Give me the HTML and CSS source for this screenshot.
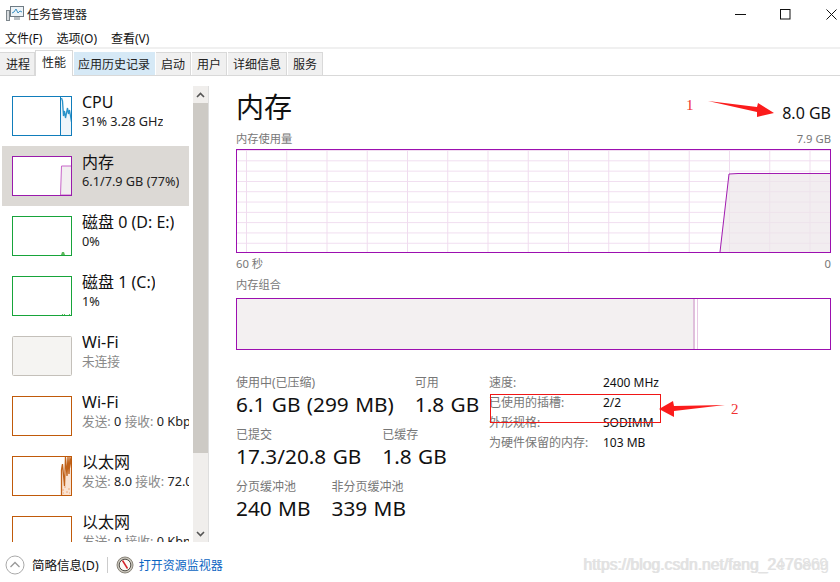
FILE: index.html
```html
<!DOCTYPE html>
<html lang="zh-CN">
<head>
    <meta charset="UTF-8">
    <meta name="viewport" content="width=device-width, initial-scale=1.0">
    <title>任务管理器</title>
    <link rel="stylesheet" href="styles.css">
</head>
<body>
    <header class="titlebar">
        <svg class="app-icon" width="18" height="18" viewBox="0 0 18 18">
            <rect x="4.5" y="1.5" width="13" height="10" fill="#eef4f8" stroke="#6f7b84"/>
            <path d="M6 8l2-1 2-3 2 4 2-2 2 1" fill="none" stroke="#3a8fc2"/>
            <rect x="0.5" y="5.5" width="3" height="10" fill="#d8dcdf" stroke="#7d868c"/>
            <path d="M8 12h6v3H8z" fill="#b9bfc4"/>
        </svg>
        <span class="app-name">任务管理器</span>
        <div class="win-btns">
            <span class="win-btn"><svg width="11" height="11" viewBox="0 0 11 11"><path d="M0 5.5h11" stroke="#111"/></svg></span>
            <span class="win-btn"><svg width="11" height="11" viewBox="0 0 11 11"><rect x="0.5" y="0.5" width="9.5" height="9.5" fill="none" stroke="#111"/></svg></span>
            <span class="win-btn"><svg width="11" height="11" viewBox="0 0 11 11"><path d="M0.5 0.5l10 10M10.5 0.5l-10 10" stroke="#111"/></svg></span>
        </div>
    </header>

    <nav class="menu">
        <span>文件(F)</span>
        <span>选项(O)</span>
        <span>查看(V)</span>
    </nav>

    <div class="tabs">
        <span class="tab">进程</span>
        <span class="tab active">性能</span>
        <span class="tab hover">应用历史记录</span>
        <span class="tab">启动</span>
        <span class="tab">用户</span>
        <span class="tab">详细信息</span>
        <span class="tab">服务</span>
    </div>

    <div class="content">
        <aside class="sidebar">
            <div class="list">
                <div class="item">
                    <svg class="thumb cpu" width="60" height="40" viewBox="0 0 60 40">
                        <path d="M49 39V2l1.500 3 1 15 1-5 1 7 2-10 1 6 1-4 2 12v13z" fill="#eef5fa"/>
                        <path d="M49.500 2l1 3 1 15 1-5 1 7 2-10 1 6 1-4 2 12" fill="none" stroke="#2a93c9" stroke-width="1.300"/>
                        <path d="M48.500 0v40" stroke="#117dbb"/>
                        <rect x="0.5" y="0.5" width="59" height="39" fill="none" stroke="currentColor"/>
                    </svg>
                    <div class="item-text">
                        <div class="item-name">CPU</div>
                        <div class="item-sub">31% 3.28 GHz</div>
                    </div>
                </div>
                <div class="item selected">
                    <svg class="thumb mem" width="60" height="40" viewBox="0 0 60 40">
                        <rect x="0.5" y="0.5" width="59" height="39" fill="#fff"/>
                        <path d="M48.5 39l1-29h10v29z" fill="#f2eff0" stroke="#c766c9"/>
                        <rect x="0.5" y="0.5" width="59" height="39" fill="none" stroke="currentColor"/>
                    </svg>
                    <div class="item-text">
                        <div class="item-name">内存</div>
                        <div class="item-sub">6.1/7.9 GB (77%)</div>
                    </div>
                </div>
                <div class="item">
                    <svg class="thumb disk" width="60" height="40" viewBox="0 0 60 40">
                        <path d="M49 39l1-3h2l1 3z" fill="#5cb85c"/>
                        <rect x="0.5" y="0.5" width="59" height="39" fill="none" stroke="currentColor"/>
                    </svg>
                    <div class="item-text">
                        <div class="item-name">磁盘 0 (D: E:)</div>
                        <div class="item-sub">0%</div>
                    </div>
                </div>
                <div class="item">
                    <svg class="thumb disk" width="60" height="40" viewBox="0 0 60 40">
                        <path d="M50 38h1v1h-1zM52 38h1v1h-1zM57 38h1v1h-1z" fill="#5cb85c"/>
                        <rect x="0.5" y="0.5" width="59" height="39" fill="none" stroke="currentColor"/>
                    </svg>
                    <div class="item-text">
                        <div class="item-name">磁盘 1 (C:)</div>
                        <div class="item-sub">1%</div>
                    </div>
                </div>
                <div class="item">
                    <svg class="thumb off" width="60" height="40" viewBox="0 0 60 40">
                        <rect x="0.5" y="0.5" width="59" height="39" rx="1" fill="#f5f4f2" stroke="currentColor"/>
                    </svg>
                    <div class="item-text">
                        <div class="item-name">Wi-Fi</div>
                        <div class="item-sub muted">未连接</div>
                    </div>
                </div>
                <div class="item">
                    <svg class="thumb net" width="60" height="40" viewBox="0 0 60 40">
                        <rect x="0.5" y="0.5" width="59" height="39" fill="none" stroke="currentColor"/>
                    </svg>
                    <div class="item-text">
                        <div class="item-name">Wi-Fi</div>
                        <div class="item-sub muted">发送: <b>0</b> 接收: <b>0 Kbps</b></div>
                    </div>
                </div>
                <div class="item">
                    <svg class="thumb net" width="60" height="40" viewBox="0 0 60 40">
                        <path d="M49 39V14l1-6 2 22 1.500-29 1.500 19 1-19 1 17 1-17 2 11v27z" fill="#f9e3d3"/>
                        <path d="M49.500 39V14l1-6 2 22 1-29 1.500 19 1-19 1 17 1-17 1.500 11" fill="none" stroke="#c0621a" stroke-width="1.300"/>
                        <path d="M50 34h2M54 36h2M52 31h2M56 33h2M51 37h1M57 37h1" stroke="#f0a878"/>
                        <rect x="0.5" y="0.5" width="59" height="39" fill="none" stroke="currentColor"/>
                    </svg>
                    <div class="item-text">
                        <div class="item-name">以太网</div>
                        <div class="item-sub muted">发送: <b>8.0</b> 接收: <b>72.0 Kbps</b></div>
                    </div>
                </div>
                <div class="item">
                    <svg class="thumb net" width="60" height="40" viewBox="0 0 60 40">
                        <rect x="0.5" y="0.5" width="59" height="39" fill="none" stroke="currentColor"/>
                    </svg>
                    <div class="item-text">
                        <div class="item-name">以太网</div>
                        <div class="item-sub muted">发送: <b>0</b> 接收: <b>0 Kbps</b></div>
                    </div>
                </div>
            </div>
            <div class="scrollbar">
                <div class="scroll-btn">
                    <svg width="9" height="6" viewBox="0 0 9 6"><path d="M1 5l3.5-3.5L8 5" fill="none" stroke="#555" stroke-width="1.6"/></svg>
                </div>
                <div class="scroll-thumb"></div>
                <div class="scroll-track"></div>
                <div class="scroll-btn">
                    <svg width="9" height="6" viewBox="0 0 9 6"><path d="M1 1l3.5 3.5L8 1" fill="none" stroke="#555" stroke-width="1.6"/></svg>
                </div>
            </div>
        </aside>

        <main class="panel">
            <div class="panel-head">
                <h1>内存</h1>
                <span class="total">8.0 GB</span>
            </div>
            <div class="caption-row caption-top">
                <span>内存使用量</span>
                <span>7.9 GB</span>
            </div>
            <svg class="graph" width="595" height="104" viewBox="0 0 595 104">
                <defs>
                    <pattern id="grid" x="10" y="2" width="40.25" height="10.3" patternUnits="userSpaceOnUse">
                        <path d="M0.5 0v10.3M0 9.8h40.25" fill="none" stroke="#f0dcef"/>
                    </pattern>
                </defs>
                <rect width="595" height="104" fill="url(#grid)"/>
                <path d="M484 103l9-78 9-0.5h93v79z" fill="#ece6ea" fill-opacity="0.7"/>
                <path d="M484 103l9-78 9-0.5h93" fill="none" stroke="#a21cb1"/>
                <rect x="0.5" y="0.5" width="594" height="103" fill="none" stroke="#9c0fb0"/>
            </svg>
            <div class="caption-row caption-axis">
                <span>60 秒</span>
                <span>0</span>
            </div>
            <div class="caption-row caption-compose">
                <span>内存组合</span>
            </div>
            <div class="compose">
                <div class="compose-used"></div>
                <div class="compose-modified"></div>
            </div>

            <div class="stats">
                <div class="stats-left">
                    <div class="stat-row">
                        <div class="stat"><div class="stat-label">使用中(已压缩)</div><div class="stat-value">6.1 GB (299 MB)</div></div>
                        <div class="stat"><div class="stat-label">可用</div><div class="stat-value">1.8 GB</div></div>
                    </div>
                    <div class="stat-row">
                        <div class="stat"><div class="stat-label">已提交</div><div class="stat-value">17.3/20.8 GB</div></div>
                        <div class="stat"><div class="stat-label">已缓存</div><div class="stat-value">1.8 GB</div></div>
                    </div>
                    <div class="stat-row">
                        <div class="stat"><div class="stat-label">分页缓冲池</div><div class="stat-value">240 MB</div></div>
                        <div class="stat"><div class="stat-label">非分页缓冲池</div><div class="stat-value">339 MB</div></div>
                    </div>
                </div>
                <dl class="specs">
                    <dt>速度:</dt><dd>2400 MHz</dd>
                    <dt>已使用的插槽:</dt><dd>2/2</dd>
                    <dt>外形规格:</dt><dd>SODIMM</dd>
                    <dt>为硬件保留的内存:</dt><dd>103 MB</dd>
                </dl>
            </div>
        </main>
    </div>

    <footer class="footer">
        <svg class="fold-icon" width="20" height="20" viewBox="0 0 20 20">
            <circle cx="10" cy="10" r="9" fill="#fff" stroke="#aaa"/>
            <path d="M5.5 12l4.500-4.500 4.500 4.500" fill="none" stroke="#999" stroke-width="1.300"/>
        </svg>
        <span class="fold-text">简略信息(D)</span>
        <span class="divider"></span>
        <svg class="monitor-icon" width="18" height="18" viewBox="0 0 18 18">
            <circle cx="9" cy="9" r="8" fill="#c9c5bb" stroke="#8a857b"/>
            <circle cx="9" cy="9" r="5.800" fill="#fbfaf6" stroke="#55524c"/>
            <path d="M6.500 4.500l5 8" stroke="#d3232a" stroke-width="1.500"/>
        </svg>
        <a class="monitor-link">打开资源监视器</a>
    </footer>

    <svg class="marks" width="840" height="582" viewBox="0 0 840 582">
        <text x="686" y="110" class="mark-num">1</text>
        <polygon points="708,101 757,107 758,103 774,113 757,117 757,112" fill="#fb1c1c"/>
        <rect x="490.500" y="394.500" width="170" height="28" fill="none" stroke="#f01616"/>
        <polygon points="725,405 674,406 673,401 659,409 674,417 674,411" fill="#fb1c1c"/>
        <text x="731" y="414" class="mark-num">2</text>
    </svg>
    <div class="watermark">
        <span>https://blog.csdn.net/fang_2476869</span>
        <span class="watermark-over">https://blog.csdn.net/feng_2e76eng</span>
    </div>
</body>
</html>
```

FILE: styles.css
```css
* {
    box-sizing: border-box;
}
html, body {
    height: 100%;
}
body {
    margin: 0;
    overflow: hidden;
    background-color: #fff;
    color: #111;
    font-family: "Noto Sans", "Noto Sans CJK SC", sans-serif;
    font-size: 12px;
    position: relative;
}

/* title bar */
.titlebar {
    display: flex;
    align-items: center;
    height: 28px;
    padding-left: 6px;
}
.app-name {
    margin-left: 3px;
    font-size: 12px;
    color: #222;
}
.win-btns {
    display: flex;
    margin-left: auto;
    margin-right: -14px;
}
.win-btn {
    display: flex;
    justify-content: center;
    align-items: center;
    width: 45.5px;
    height: 28px;
}

.menu {
    display: flex;
    gap: 14px;
    height: 21px;
    padding-left: 5px;
    font-size: 12px;
    line-height: 22px;
    border-bottom: 2px solid #f0f0f0;
}

/* tabs */
.tabs {
    display: flex;
    align-items: flex-end;
    height: 27px;
    border-bottom: 1px solid #d9d9d9;
}
.tab {
    height: 23px;
    padding: 0 5px;
    margin-right: 1px;
    background-color: #f0f0f0;
    border: 1px solid #d9d9d9;
    border-bottom: none;
    border-left: none;
    line-height: 23px;
    font-size: 12px;
    color: #222;
    white-space: nowrap;
}
.tab:first-child {
    width: 35px;
    margin-right: 0;
    padding: 0 4px 0 6px;
}
.tab.active {
    height: 26px;
    margin-bottom: -1px;
    padding: 0 6px;
    background-color: #fff;
    border-left: 1px solid #d9d9d9;
    line-height: 24px;
}
.tab.hover {
    padding: 0 4px;
    background-color: #d6e9f6;
    border-color: #d6e9f6;
}

.content {
    display: flex;
    height: 466px;
}

/* left list */
.sidebar {
    display: flex;
    flex: none;
    width: 236px;
    height: 466px;
    padding: 10px 0 0 2px;
}
.list {
    width: 187px;
    overflow: hidden;
}
.item {
    display: flex;
    height: 60px;
    padding: 10px 0 0 10px;
}
.item.selected {
    background-color: #dcd9d5;
}
.thumb {
    flex: none;
    display: block;
}
.cpu { color: #117dbb; }
.mem { color: #9a1aac; }
.disk { color: #17a43a; }
.net { color: #c05a0a; }
.off { color: #c4c0ba; }
.item-text {
    margin-left: 10px;
    margin-top: -5px;
    white-space: nowrap;
    overflow: hidden;
}
.item-name {
    font-size: 16px;
    line-height: 22px;
    color: #111;
}
.item-sub {
    font-size: 12.700px;
    line-height: 17px;
    color: #222;
}
.item-sub.muted {
    color: #8a8a8a;
}
.item-sub b {
    font-weight: normal;
    color: #222;
}

.scrollbar {
    display: flex;
    flex-direction: column;
    width: 16px;
    margin-left: 4px;
    background-color: #f0eeec;
    border-right: 1px solid #dedede;
}
.scroll-btn {
    display: flex;
    flex: none;
    justify-content: center;
    align-items: center;
    height: 17px;
}
.scroll-thumb {
    flex: none;
    height: 350px;
    background-color: #cdcac5;
}
.scroll-track {
    flex: 1;
}

/* right panel */
.panel {
    flex: none;
    width: 595px;
}
.panel-head {
    display: flex;
    justify-content: space-between;
    align-items: flex-end;
    height: 52px;
    padding-top: 10px;
}
.panel-head h1 {
    margin: 0;
    font-size: 28px;
    font-weight: normal;
    line-height: 42px;
}
.total {
    font-size: 16px;
    line-height: 22px;
    margin-bottom: 4px;
}
.caption-row {
    display: flex;
    justify-content: space-between;
    font-size: 11.250px;
    line-height: 16px;
    color: #777;
}
.caption-top {
    height: 21px;
    padding-top: 3px;
}
.graph {
    display: block;
}
.caption-axis {
    height: 23px;
    padding-top: 3px;
}
.caption-compose {
    height: 22px;
    padding-top: 1px;
}
.compose {
    display: flex;
    height: 52px;
    border: 1px solid #9c0fb0;
}
.compose-used {
    flex: none;
    width: 458px;
    background-color: #f3f0f1;
    border-right: 2px solid #e0bfdc;
}
.compose-modified {
    flex: none;
    width: 3px;
    border-right: 1px solid #e8c8e4;
}

.stats {
    display: flex;
    padding-top: 24px;
}
.stats-left {
    width: 253px;
}
.stat-row {
    display: flex;
    gap: 21px;
    height: 52px;
    white-space: nowrap;
}
.stat-label {
    font-size: 12px;
    line-height: 17px;
    color: #777;
}
.stat-value {
    font-size: 20.800px;
    line-height: 27px;
    word-spacing: 1px;
    color: #111;
}
.specs {
    display: grid;
    grid-template-columns: 114px auto;
    grid-auto-rows: 20px;
    align-content: start;
    margin: 0;
    font-size: 12px;
    line-height: 17px;
}
.specs dt {
    color: #777;
}
.specs dd {
    margin: 0;
    color: #111;
}

/* bottom bar */
.footer {
    display: flex;
    align-items: center;
    height: 40px;
    padding: 5px 0 0 5px;
    background-color: #fff;
}
.fold-text {
    margin-left: 7px;
    font-size: 12.500px;
}
.divider {
    width: 1px;
    height: 16px;
    margin: 0 8px;
    background-color: #ccc;
}
.monitor-link {
    margin-left: 5px;
    font-size: 12px;
    color: #0a64c2;
}

/* red marks drawn over the screenshot */
.marks {
    position: absolute;
    top: 0;
    left: 0;
    pointer-events: none;
}
.mark-num {
    font-family: "Liberation Serif", serif;
    font-size: 15px;
    fill: #f03030;
}
.watermark {
    position: absolute;
    top: 556px;
    left: 583px;
    width: 250px;
    font-family: "Liberation Sans", sans-serif;
    font-size: 15.700px;
    line-height: 18px;
    color: #e2e2e2;
    white-space: nowrap;
}
.watermark-over {
    position: absolute;
    top: 0;
    left: 1px;
}
```
